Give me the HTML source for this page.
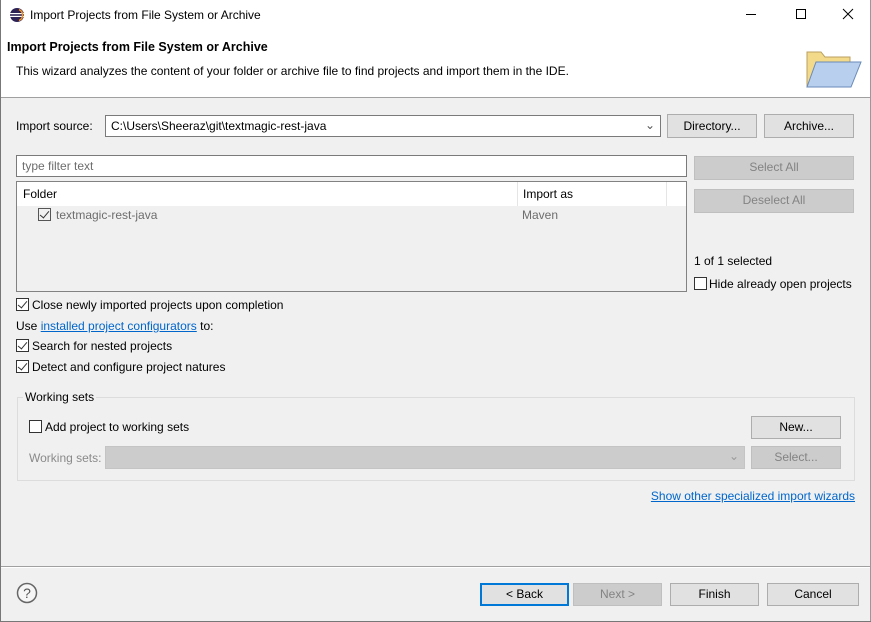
<!DOCTYPE html>
<html><head><style>
*{box-sizing:border-box;margin:0;padding:0}
body{width:871px;height:622px;position:relative;background:#f0f0f0;font-family:"Liberation Sans",sans-serif;font-size:12px;color:#000;overflow:hidden}
.a{position:absolute;white-space:nowrap}
.btn{position:absolute;background:#e1e1e1;border:1px solid #adadad;text-align:center;line-height:21px;font-size:12px}
.dis{background:#cccccc;border-color:#bfbfbf;color:#838383}
.cb{position:absolute;width:13px;height:13px;border:1px solid #333;background:#fff}
.cb.on::after{content:"";position:absolute;left:3px;top:0px;width:4px;height:8px;border:solid #333;border-width:0 1.5px 1.5px 0;transform:rotate(40deg)}
</style></head><body>
<div class="a" style="left:0;top:0;width:871px;height:97px;background:#fff"></div>
<div class="a" style="left:0;top:97px;width:871px;height:1px;background:#a0a0a0"></div>
<div class="a" style="left:0;top:0;width:1px;height:622px;background:#777"></div>
<div class="a" style="left:870px;top:0;width:1px;height:622px;background:#999"></div>
<div class="a" style="left:0;top:621px;width:871px;height:1px;background:#777"></div>
<svg class="a" style="left:10px;top:8px" width="14" height="14" viewBox="0 0 14 14"><circle cx="7" cy="7" r="7" fill="#2c2255"/><rect x="0" y="5" width="14" height="1.2" fill="#fff"/><rect x="0" y="7.8" width="14" height="1.2" fill="#fff"/><path d="M9 1.5a6 6 0 0 1 0 11" stroke="#f7941e" stroke-width="1.5" fill="none"/></svg>
<div class="a" style="left:30px;top:8px">Import Projects from File System or Archive</div>
<div class="a" style="left:746px;top:14px;width:10px;height:1px;background:#000"></div>
<div class="a" style="left:796px;top:9px;width:10px;height:10px;border:1px solid #000"></div>
<svg class="a" style="left:842px;top:8px" width="12" height="12"><path d="M1 1L11 11M11 1L1 11" stroke="#000" stroke-width="1"/></svg>
<div class="a" style="left:7px;top:40px;font-weight:bold;font-size:12.5px">Import Projects from File System or Archive</div>
<div class="a" style="left:16px;top:64px">This wizard analyzes the content of your folder or archive file to find projects and import them in the IDE.</div>
<svg class="a" style="left:804px;top:44px" width="58" height="46" viewBox="0 0 58 46"><path d="M3 8h14l4 5h25v30H3z" fill="#f3d98a" stroke="#b8a060"/><path d="M12 18h45l-10 25H3z" fill="#b8d0ee" stroke="#6a8ab8"/></svg>
<div class="a" style="left:16px;top:119px">Import source:</div>
<div class="a" style="left:105px;top:115px;width:556px;height:22px;background:#fff;border:1px solid #7a7a7a;padding:3px 5px">C:\Users\Sheeraz\git\textmagic-rest-java</div>
<div class="a" style="left:645px;top:118px;color:#555">&#8964;</div>
<div class="btn" style="left:667px;top:114px;width:90px;height:24px;line-height:23px">Directory...</div>
<div class="btn" style="left:764px;top:114px;width:90px;height:24px;line-height:23px">Archive...</div>
<div class="a" style="left:16px;top:155px;width:671px;height:22px;background:#fff;border:1px solid #7a7a7a;padding:3px 5px;color:#6d6d6d">type filter text</div>
<div class="btn dis" style="left:694px;top:156px;width:160px;height:24px">Select All</div>
<div class="btn dis" style="left:694px;top:189px;width:160px;height:24px">Deselect All</div>
<div class="a" style="left:16px;top:181px;width:671px;height:111px;border:1px solid #828282;background:#f0f0f0"></div>
<div class="a" style="left:17px;top:182px;width:669px;height:24px;background:#fff"></div>
<div class="a" style="left:517px;top:182px;width:1px;height:24px;background:#e5e5e5"></div>
<div class="a" style="left:666px;top:182px;width:1px;height:24px;background:#e5e5e5"></div>
<div class="a" style="left:23px;top:187px">Folder</div>
<div class="a" style="left:523px;top:187px">Import as</div>
<div class="cb on" style="left:38px;top:208px;border-color:#555;background:transparent"></div>
<div class="a" style="left:56px;top:208px;color:#6d6d6d">textmagic-rest-java</div>
<div class="a" style="left:522px;top:208px;color:#6d6d6d">Maven</div>
<div class="a" style="left:694px;top:254px">1 of 1 selected</div>
<div class="cb" style="left:694px;top:277px"></div>
<div class="a" style="left:709px;top:277px">Hide already open projects</div>
<div class="cb on" style="left:16px;top:298px"></div>
<div class="a" style="left:32px;top:298px">Close newly imported projects upon completion</div>
<div class="a" style="left:16px;top:319px">Use <span style="color:#0066cc;text-decoration:underline">installed project configurators</span> to:</div>
<div class="cb on" style="left:16px;top:339px"></div>
<div class="a" style="left:32px;top:339px">Search for nested projects</div>
<div class="cb on" style="left:16px;top:360px"></div>
<div class="a" style="left:32px;top:360px">Detect and configure project natures</div>
<div class="a" style="left:17px;top:397px;width:838px;height:84px;border:1px solid #dcdcdc"></div>
<div class="a" style="left:23px;top:390px;background:#f0f0f0;padding:0 2px">Working sets</div>
<div class="cb" style="left:29px;top:420px"></div>
<div class="a" style="left:45px;top:420px">Add project to working sets</div>
<div class="btn" style="left:751px;top:416px;width:90px;height:23px">New...</div>
<div class="a" style="left:29px;top:451px;color:#8a8a8a">Working sets:</div>
<div class="a" style="left:105px;top:446px;width:640px;height:23px;background:#cccccc;border:1px solid #c4c4c4"></div>
<div class="a" style="left:729px;top:449px;color:#999">&#8964;</div>
<div class="btn dis" style="left:751px;top:446px;width:90px;height:23px">Select...</div>
<div class="a" style="right:16px;top:489px;color:#0066cc;text-decoration:underline">Show other specialized import wizards</div>
<div class="a" style="left:1px;top:566px;width:869px;height:1px;background:#a0a0a0"></div>
<div class="a" style="left:1px;top:567px;width:869px;height:1px;background:#fff"></div>
<svg class="a" style="left:16px;top:582px" width="22" height="22" viewBox="0 0 22 22"><circle cx="11" cy="11" r="9.5" fill="#f6f6f6" stroke="#666" stroke-width="1.5"/><text x="11" y="16" font-family="Liberation Sans" font-size="14" text-anchor="middle" fill="#555">?</text></svg>
<div class="btn" style="left:480px;top:583px;width:89px;height:23px;border:2px solid #0078d7;line-height:19px">&lt; Back</div>
<div class="btn dis" style="left:573px;top:583px;width:89px;height:23px">Next &gt;</div>
<div class="btn" style="left:670px;top:583px;width:89px;height:23px">Finish</div>
<div class="btn" style="left:767px;top:583px;width:92px;height:23px">Cancel</div>
</body></html>
